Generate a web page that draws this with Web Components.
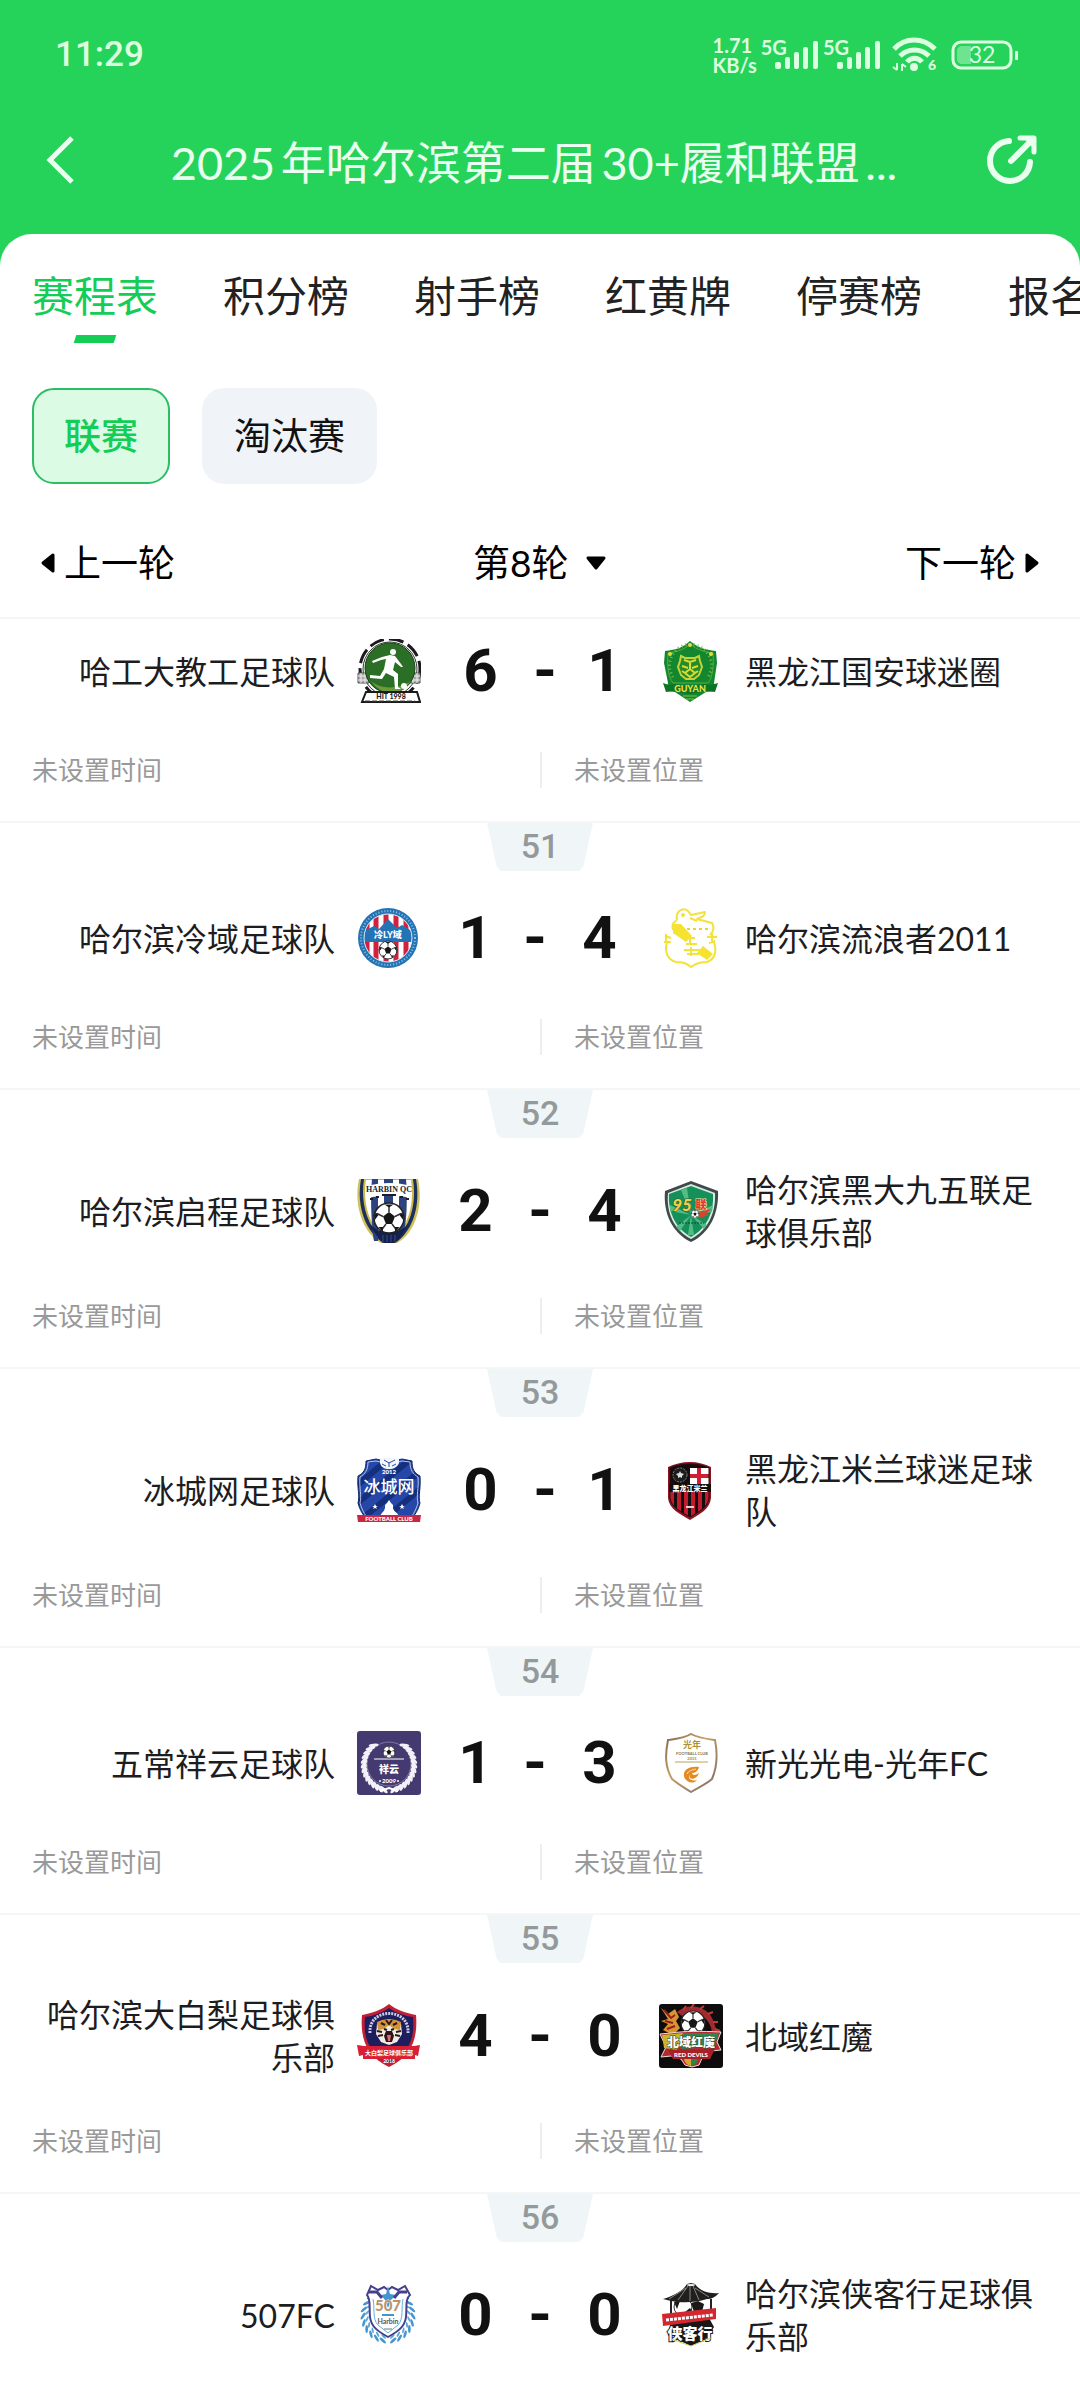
<!DOCTYPE html>
<html lang="zh-CN">
<head>
<meta charset="utf-8">
<meta name="viewport" content="width=device-width, initial-scale=1">
<title>赛程表</title>
<style>
  body {
    margin: 0;
    background: #fff;
    color: #1d1d1f;
    font-family: Lato, "Noto Sans CJK SC", sans-serif;
  }
</style>
</head>
<body>
<league-page>
  <status-bar slot="top" time="11:29"></status-bar>
  <page-header slot="top">2025年哈尔滨第二届30+履和联盟...</page-header>

  <tab-bar>
    <tab-item active>赛程表</tab-item>
    <tab-item>积分榜</tab-item>
    <tab-item>射手榜</tab-item>
    <tab-item>红黄牌</tab-item>
    <tab-item>停赛榜</tab-item>
    <tab-item>报名</tab-item>
  </tab-bar>

  <stage-filter>
    <stage-chip active>联赛</stage-chip>
    <stage-chip>淘汰赛</stage-chip>
  </stage-filter>

  <round-nav round="8"></round-nav>

  <match-card home="哈工大教工足球队" home-logo="hit" away="黑龙江国安球迷圈" away-logo="guoan" score="6-1" time="未设置时间" place="未设置位置"></match-card>
  <match-card number="51" home="哈尔滨冷域足球队" home-logo="lengyu" away="哈尔滨流浪者2011" away-logo="wanderer" score="1-4" time="未设置时间" place="未设置位置"></match-card>
  <match-card number="52" home="哈尔滨启程足球队" home-logo="qicheng" away="哈尔滨黑大九五联足球俱乐部" away-logo="nine5" score="2-4" time="未设置时间" place="未设置位置"></match-card>
  <match-card number="53" home="冰城网足球队" home-logo="bingcheng" away="黑龙江米兰球迷足球队" away-logo="milan" score="0-1" time="未设置时间" place="未设置位置"></match-card>
  <match-card number="54" home="五常祥云足球队" home-logo="xiangyun" away="新光光电-光年FC" away-logo="guangnian" score="1-3" time="未设置时间" place="未设置位置"></match-card>
  <match-card number="55" home="哈尔滨大白梨足球俱乐部" home-logo="dabaili" away="北域红魔" away-logo="redevils" score="4-0" time="未设置时间" place="未设置位置"></match-card>
  <match-card number="56" home="507FC" home-logo="fc507" away="哈尔滨侠客行足球俱乐部" away-logo="xiake" score="0-0"></match-card>
</league-page>

<script>
// ---- svg helpers -------------------------------------------------------

// small football, drawn on a 20 unit circle and scaled to r
function ball(cx, cy, r) {
  return `
    <g transform="translate(${cx} ${cy}) scale(${r / 10})">
      <circle r="10" fill="#fff" stroke="#222" stroke-width="1"/>
      <path d="M0-4 4-1 2 4H-2L-4-1Z" fill="#161616"/>
      <path d="M0-4V-8M4-1 8-3M2 4 5 8M-2 4-5 8M-4-1-8-3" stroke="#333" stroke-width="1"/>
      <path d="M-3-9 3-9 0-7ZM9-4 10 2 7-2ZM-9-4-10 2-7-2ZM4 9 7 6 4 6ZM-4 9-7 6-4 6Z" fill="#161616"/>
    </g>`;
}

// two branches of leaves that start at the bottom and climb both sides
function laurel(cx, cy, r, color, count, size) {
  let out = "";
  for (let i = 0; i < count; i++) {
    const a = 12 + i * (140 / count);
    [a, -a].forEach(angle => {
      const tilt = angle > 0 ? 32 : -32;
      out += `<g transform="rotate(${-angle} ${cx} ${cy}) translate(${cx} ${cy + r}) rotate(${-tilt})">
        <ellipse rx="${size}" ry="${size / 3}" fill="${color}"/></g>`;
    });
  }
  return out;
}

const LOGOS = {
  hit: `
    <circle cx="33" cy="30" r="30" fill="#fff" stroke="#1b1b1b" stroke-width="3" stroke-dasharray="15 5"/>
    <circle cx="33" cy="30" r="27" fill="none" stroke="#333" stroke-width="1"/>
    <path d="M1 34h11v10H1ZM53 34h10v10H53Z" fill="#aaa" stroke="#555"/>
    <path d="M1 37h11M1 41h11M53 37h10M53 41h10M4 34v10M8 34v10M56 34v10M60 34v10" stroke="#eee"/>
    <circle cx="33" cy="29" r="25" fill="#2b6e25" stroke="#173f14"/>
    <path d="M14 42c8 8 28 9 40 0-6 9-14 12-20 12s-15-4-20-12Z" fill="#6d9a3c"/>
    <circle cx="36" cy="13" r="3" fill="#fff"/>
    <path d="M25 18 33 16 38 17 44 25 46 28 44 28 38 23 36 31 41 35 41 48 44 50 38 50 37 38 29 34 25 40 13 39 13 36 23 37 27 30 29 20 24 21 16 24 15 22Z" fill="#fff"/>
    <circle cx="47" cy="47" r="3" fill="#fff"/>
    <path d="M9 53H60L63 63H5Z" fill="#fff" stroke="#1b1b1b" stroke-width="2"/>
    <text x="34" y="60" font-size="7" font-weight="900" text-anchor="middle" fill="#1b1b1b">HIT 1998</text>
    <path d="M8 62h50" stroke="#444" stroke-dasharray="5 2"/>`,
  guoan: `
    <path d="M31 2C38 8 46 11 57 12L58 24 55 44 56 52 47 53 31 63 16 53 7 52 9 44 5 24 6 12C17 11 25 8 31 2Z" fill="#12872f"/>
    <path d="M31 5C38 11 46 13 54 14 55 26 54 38 49 44H14C9 38 8 26 9 14 17 13 25 11 31 5Z" fill="none" stroke="#58ab3a"/>
    <path d="M14 38A21 21 0 1 1 49 38" fill="none" stroke="#7fbd42" stroke-width="3" stroke-dasharray="1 3"/>
    <circle cx="31" cy="6" r="2" fill="#e2dd3d"/><circle cx="11" cy="15" r="2" fill="#e2dd3d"/><circle cx="52" cy="15" r="2" fill="#e2dd3d"/>
    <path d="M22 17 26 19H36L40 17 41 22 43 28 40 36 35 40H27L22 36 19 28 21 22Z" fill="#268c25" stroke="#c3d23b" stroke-width="2"/>
    <path d="M25 21 31 23 37 21M23 27l6 2M39 27l-6 2M26 34l5-4 5 4-5 4ZM31 23V30M23 32l3 2M39 32l-3 2" fill="none" stroke="#d9dc38" stroke-width="2"/>
    <path d="M4 44 10 46 16 45 31 47 46 45 52 46 59 44 56 53 48 52 31 55 14 52 7 53Z" fill="#0c7427"/>
    <text x="31" y="53" font-size="9" font-weight="900" text-anchor="middle" fill="#e6e03b">GUYAN</text>
    <path d="M24 57h14M27 60h8" stroke="#85bf3c"/>`,
  lengyu: `
    <clipPath id="in"><circle cx="31" cy="32" r="24"/></clipPath>
    <circle cx="31" cy="32" r="30" fill="#2474b5"/>
    <circle cx="31" cy="32" r="27" fill="none" stroke="#8fc2e6" stroke-width="2" stroke-dasharray="1 2"/>
    <circle cx="31" cy="32" r="24" fill="#fff"/>
    <g clip-path="url(#in)">
      <path d="M10 8V56M19 8V56M29 8V56M39 8V56M49 8V56" stroke="#d3203c" stroke-width="5"/>
      <path d="M5 36V26L17 20 22 23 31 13 40 22 45 19 58 27V36Z" fill="#2474b5"/>
    </g>
    <circle cx="31" cy="32" r="24" fill="none" stroke="#d6e9f6"/>
    <text x="31" y="32" font-size="9" font-weight="900" text-anchor="middle" fill="#fff">冷LY域</text>
    ${ball(31, 44, 9)}`,
  wanderer: `
    <g fill="none" stroke="#f3e23a" stroke-width="2" stroke-linejoin="round">
      <path d="M18 14C16 5 24 1 29 5L32 9 46 6C46 10 43 11 38 13L53 17C56 22 54 26 51 29M18 14C13 17 13 20 14 24"/>
      <path d="M8 36C5 46 9 54 17 56 24 56 28 57 32 61 37 57 42 56 48 56 56 53 58 46 55 36"/>
      <path d="M31 12 38 15"/>
      <path d="M6 30l6 2M5 36h7M7 28v8M48 31h10M53 28v9M50 37l6-2"/>
      <path d="M28 32h8M31 29v9M27 38h11M25 44h16M28 48h12M32 41v9"/>
    </g>
    <path d="M14 18 22 18 33 30 27 36 14 27ZM44 40 54 48 48 54 38 47Z" fill="#f6e231"/>
    <circle cx="24" cy="9" r="2" fill="#f3e23a"/>
    <path d="M28 23h3M34 23h3M40 23h3M46 23h3" stroke="#e9d42a" stroke-width="2"/>`,
  qicheng: `
    <path d="M2 0H61C67 28 57 55 40 64H24C7 55-4 28 2 0Z" fill="#cfc25a"/>
    <path d="M4 0H59C64 28 55 53 38 64H26C9 53-1 28 4 0Z" fill="#1d2f5c"/>
    <path d="M8 0H55C59 27 51 50 36 61H28C13 50 4 27 8 0Z" fill="#fff" stroke="#cdb84e" stroke-width="2"/>
    <path d="M15 0h6V62H17C15 50 13 25 15 0ZM27 0h9V60H27ZM42 0h7C51 25 49 50 46 55H42Z" fill="#2b4480"/>
    <path d="M10 7C25 3 40 3 54 7V19C40 16 25 16 10 19Z" fill="#fff"/>
    <text x="32" y="13" font-family="Liberation Serif, serif" font-size="8" font-weight="700" text-anchor="middle" fill="#1d1d25">HARBIN QC</text>
    <path d="M13 20h3M19 18h3M25 16h14M43 18h3M49 20h3" stroke="#1d1d25" stroke-width="2"/>
    <path d="M13 44C18 56 46 56 51 44 48 54 42 60 37 64H28C20 58 15 52 13 44Z" fill="#14204d"/>
    ${ball(32, 39, 15)}
    <path d="M26 56v7M30 56v7M34 56v7M38 56v7" stroke="#3a4a86"/>`,
  nine5: `
    <path d="M32 2 59 12C60 34 51 54 32 63 13 54 4 34 6 12Z" fill="#3e4a4c"/>
    <path d="M32 5 56 14C57 34 49 51 32 60 15 51 7 34 9 14Z" fill="#dcebe2"/>
    <path d="M32 7 54 15C55 33 48 49 32 58 16 49 9 33 10 15Z" fill="#14905a"/>
    <path d="M32 36 11 26 11 32ZM32 36 17 48 21 52ZM32 36 29 56 35 56ZM32 36 45 50 48 46ZM32 36 54 26 53 33ZM32 36 22 11 28 9Z" fill="#55bb84"/>
    <text x="23" y="32" font-size="17" font-weight="900" font-style="italic" text-anchor="middle" fill="#f0d04a" stroke="#3c5b25" stroke-width="1" paint-order="stroke">95</text>
    <text x="42" y="30" font-size="11" font-weight="900" text-anchor="middle" fill="#dd3a2c" stroke="#f6e6ad" stroke-width="1" paint-order="stroke">联</text>
    <path d="M38 33 53 30 46 35 51 36 40 39Z" fill="#d8452f"/>
    ${ball(36, 35, 4)}
    <path d="M20 44h25" stroke="#0c4930" stroke-dasharray="2 1"/>`,
  bingcheng: `
    <clipPath id="in"><path d="M9 3 19 1 32 4 45 1 55 3C55 11 57 15 63 18 64 30 61 38 63 45 61 53 57 58 55 60H9C7 58 3 53 1 45 3 38 0 30 1 18 7 15 9 11 9 3Z"/></clipPath>
    <g clip-path="url(#in)">
      <path d="M0 0H64V64H0Z" fill="#2647a8"/>
      <path d="M-8 34 40-6M-8 52 60-4M-4 68 72 6M14 72 74 22" stroke="#14307d" stroke-width="6"/>
    </g>
    <path d="M11 4 19 3 32 6 45 3 53 4C53 12 56 16 61 19 62 30 59 38 61 45 59 52 56 57 54 59H10C8 57 5 52 3 45 5 38 2 30 3 19 8 16 11 12 11 4Z" fill="none" stroke="#b8c6ec"/>
    <path d="M9 3 19 1 32 4 45 1 55 3C55 11 57 15 63 18 64 30 61 38 63 45 61 53 57 58 55 60H9C7 58 3 53 1 45 3 38 0 30 1 18 7 15 9 11 9 3Z" fill="none" stroke="#142a6b"/>
    <path d="M23 0H42V5C40 9 37 11 32 11S24 9 23 5Z" fill="#f4f6fc"/>
    <path d="M27 2 32 5 38 2M32 5V9M25 6 29 8M39 6 35 8" stroke="#2647a8" fill="none"/>
    <text x="32" y="16" font-size="6" font-weight="900" text-anchor="middle" fill="#fff">2012</text>
    <text x="32" y="35" font-size="17" font-weight="500" text-anchor="middle" fill="#fff">冰城网</text>
    <path d="M23 58C25 54 27 54 28 50V47L30 45 32 42 34 45 36 47V50C37 54 40 54 42 58Z" fill="#fff"/>
    <path d="M18 46l1 2h2l-2 1 1 2-2-1-2 1 1-2-2-1h2ZM45 46l1 2h2l-2 1 1 2-2-1-2 1 1-2-2-1h2Z" fill="#fff"/>
    <path d="M0 57H64L63 64H1Z" fill="#ca2545"/>
    <text x="32" y="63" font-size="6" font-weight="900" text-anchor="middle" fill="#fff">FOOTBALL CLUB</text>`,
  milan: `
    <clipPath id="in"><path d="M31 6C38 6 44 7 50 10V40C49 49 40 54 31 59 22 54 12 49 11 40V10C17 7 24 6 31 6Z"/></clipPath>
    <path d="M31 4C39 4 46 6 52 9V40C51 51 41 56 31 62 21 56 10 51 9 40V9C15 6 23 4 31 4Z" fill="#8c1420"/>
    <g clip-path="url(#in)">
      <path d="M9 4H52V62H9Z" fill="#140d0e"/>
      <path d="M31 10H51V26H31Z" fill="#fff"/>
      <path d="M31 18H51M40 10V26" stroke="#cf1f32" stroke-width="4"/>
      <path d="M13 34V56M20 34V58M27 34V60M34 34V60M41 34V58M48 34V56" stroke="#c01c2e" stroke-width="4"/>
    </g>
    <path d="M31 6C38 6 44 7 50 10V40C49 49 40 54 31 59 22 54 12 49 11 40V10C17 7 24 6 31 6Z" fill="none" stroke="#2a0b0f"/>
    <circle cx="21" cy="17" r="7" fill="#1c1c1c" stroke="#7d7d7d" stroke-dasharray="2 1"/>
    <path d="M21 13 22 15 25 16 23 18 23 20 21 19 19 20 19 18 17 16 20 15Z" fill="#ddd"/>
    <path d="M10 26H52V34H10Z" fill="#140d0e"/>
    <text x="31" y="33" font-size="7" font-weight="900" text-anchor="middle" fill="#fff">黑龙江米兰</text>
    <path d="M27 49h8" stroke="#f0c9cc" stroke-width="2"/>`,
  xiangyun: `
    <rect width="64" height="64" rx="3" fill="#453a70"/>
    <circle cx="32" cy="33" r="22" fill="none" stroke="#8078a4"/>
    ${laurel(32, 34, 25, "#f2f1f7", 14, 5)}
    <path d="M17 28H47" stroke="#fff"/>
    ${ball(32, 21, 6)}
    <text x="32" y="42" font-size="10" font-weight="900" text-anchor="middle" fill="#fff">祥云</text>
    <text x="32" y="52" font-size="6" font-weight="900" text-anchor="middle" fill="#fff">2009</text>
    <circle cx="23" cy="50" r="1" fill="#fff"/><circle cx="41" cy="50" r="1" fill="#fff"/>
    <path d="M23 60 32 57 41 60" fill="none" stroke="#fff" stroke-width="2"/>`,
  guangnian: `
    <linearGradient id="edge" x2="1" y2="1"><stop stop-color="#7f6a5c"/><stop offset="0.4" stop-color="#c2a061"/><stop offset="1" stop-color="#7b6a71"/></linearGradient>
    <path d="M32 3C39 7 48 8 56 9 59 24 58 36 53 48 46 54 38 57 32 61 26 57 20 54 13 48 6 36 6 24 9 9 17 8 26 7 32 3Z" fill="#fff" stroke="url(#edge)" stroke-width="2"/>
    <text x="33" y="17" font-family="Noto Sans CJK SC, sans-serif" font-size="9" font-weight="700" text-anchor="middle" fill="#ad9034">光年</text>
    <text x="33" y="24" font-size="4" font-weight="900" text-anchor="middle" fill="#8c7d58">FOOTBALL CLUB</text>
    <text x="33" y="29" font-size="4" font-weight="900" text-anchor="middle" fill="#b39137">2015</text>
    <path d="M16 31H49" stroke="#b7a554"/>
    <path d="M40 36C30 35 24 39 25 45 26 51 34 54 38 49 32 51 28 47 31 43 28 50 38 49 40 42 36 45 33 44 33 42 36 42 39 40 40 36Z" fill="#e58a22"/>
    <path d="M28 43C29 40 33 39 37 38" fill="none" stroke="#fbe3bd"/>`,
  dabaili: `
    <path d="M32 0C39 6 49 9 59 11 61 34 55 52 32 63 9 52 3 34 5 11 15 9 25 6 32 0Z" fill="#c21f34"/>
    <path d="M32 4C39 9 48 12 56 13 58 33 53 49 32 59 11 49 6 33 8 13 16 12 25 9 32 4Z" fill="#1e1d5e"/>
    <path d="M13 29C11 3 53 3 51 29" fill="none" stroke="#c9cbe4" stroke-width="3" stroke-dasharray="2 1"/>
    <path d="M20 20 24 17 32 15 40 17 44 20 45 30 40 38 32 41 24 38 19 30Z" fill="#f0ece2"/>
    <path d="M20 18 25 16 32 15 39 16 44 18 43 26 37 25 32 21 27 25 21 26Z" fill="#d29436"/>
    <path d="M29 16 32 20 35 16M24 19l4 2M40 19l-4 2M20 27l5 1M44 27l-5 1M21 32l5-1M43 32l-5-1" fill="none" stroke="#2b1b16" stroke-width="2"/>
    <path d="M27 25l3 1M37 25l-3 1" stroke="#1a1a1a" stroke-width="2"/>
    <path d="M29 27H35L37 32 35 38H29L27 32Z" fill="#30121a"/>
    <path d="M30 31H34L33 37H31Z" fill="#e06f75"/>
    <path d="M0 41 7 42 57 42 63 41 61 52 58 51 58 55H6V51L2 52Z" fill="#d91f36"/>
    <text x="32" y="51" font-size="6" font-weight="700" text-anchor="middle" fill="#fff">大白梨足球俱乐部</text>
    <text x="32" y="59" font-size="5" font-weight="900" text-anchor="middle" fill="#fff">2018</text>`,
  redevils: `
    <rect width="64" height="64" rx="3" fill="#0f0c0d"/>
    <path d="M18 8C28-1 50 0 55 19L59 30 53 28C51 14 39 5 23 12Z" fill="#a12a2f"/>
    <path d="M24 6l3-4M32 4l3-4M41 5l4-3M49 10l5-2M54 18l5 0M56 25l5 2" stroke="#c03a39" stroke-width="2"/>
    <path d="M2 4 9 10 16 5 20 13 17 17 21 24 14 31 4 26 9 20 2 17 9 15Z" fill="#d9932f"/>
    <path d="M5 6 12 14 16 11M6 17 14 19M8 25 16 22" fill="none" stroke="#8f2023" stroke-width="2"/>
    ${ball(34, 19, 12)}
    <path d="M1 30 12 29C26 27 41 27 62 28L58 38 62 46 52 47 44 52 40 61 33 63 26 61 22 55 12 52 2 53 7 43Z" fill="#b5282f" stroke="#e8e1da"/>
    <path d="M3 31 24 29 18 46 5 44Z" fill="#cbb42d"/><path d="M24 29 60 29 55 43 22 45Z" fill="#28864f"/>
    <text x="32" y="43" font-size="12" font-weight="900" text-anchor="middle" fill="#fff" stroke="#27462f" stroke-width="1" paint-order="stroke">北域红魔</text>
    <path d="M9 46 56 45 51 55 14 55Z" fill="#a81f28"/>
    <text x="32" y="53" font-size="6" font-weight="900" text-anchor="middle" fill="#fff">RED DEVILS</text>
    <path d="M25 55H32V62C28 61 26 59 25 55Z" fill="#d9a62c"/><path d="M32 55H39C38 59 36 61 32 62Z" fill="#27864a"/>`,
  fc507: `
    ${laurel(31, 33, 25, "#4394cf", 9, 4)}
    ${laurel(31, 33, 21, "#5aa9db", 8, 3)}
    <path d="M14 3 21 7 27 4 31 7 35 4 41 7 48 3 53 12C48 16 50 24 49 34 48 44 40 49 31 54 22 49 14 44 13 34 12 24 14 16 10 12Z" fill="#fff" stroke="#44408e" stroke-width="2"/>
    <path d="M16 16C18 24 15 36 21 42L31 50 41 42C47 36 44 24 46 16" fill="none" stroke="#5eb3de"/>
    <path d="M24 12 29 11 31 3 33 11 39 12 34 17 31 25 28 17Z" fill="#4394cf"/>
    <path d="M12 9 20 9 25 15M50 9 42 9 37 15" fill="none" stroke="#44408e" stroke-width="3"/>
    <text x="31" y="28" font-size="15" font-weight="900" text-anchor="middle" fill="#bb946e" stroke="#fff" stroke-width="1" paint-order="stroke">507</text>
    <path d="M25 32h12" stroke="#4394cf" stroke-width="2"/>
    <text x="31" y="41" font-size="7" text-anchor="middle" font-weight="700" fill="#555">Harbin</text>
    <path d="M27 46h8" stroke="#777"/>`,
  xiake: `
    <path d="M10 46 17 56 32 63 47 56 55 44 50 35H14Z" fill="#171718"/>
    <path d="M15 17H49V34H15Z" fill="#fff"/>
    <path d="M12 17V34M52 16V34" stroke="#222" stroke-width="2"/>
    <circle cx="24" cy="24" r="9" fill="#fff" stroke="#333"/>
    <path d="M32 20 39 18 45 21 43 29 35 29ZM15 19 21 18 18 26ZM26 29 31 25 34 30Z" fill="#191919"/>
    <path d="M4 16C14 13 24 8 28 1L32 0 36 1C41 8 50 11 60 10 56 14 53 16 48 16 36 20 22 20 12 18Z" fill="#211e1e"/>
    <path d="M31 2V18M29 3 19 17M27 5 10 16M34 3 40 17M36 5 50 14" stroke="#8b8784"/>
    <ellipse cx="32" cy="2" rx="4" ry="1" fill="#eee"/>
    <path d="M3 31 57 25V36L4 43Z" fill="#d4262e"/>
    <path d="M7 37 54 32" stroke="#fff" stroke-width="3" stroke-dasharray="3 1"/>
    <text x="31" y="56" font-size="15" font-weight="900" text-anchor="middle" fill="#fff" stroke="#171718" stroke-width="2" paint-order="stroke">侠客行</text>
    <path d="M12 56 32 63 52 55" fill="none" stroke="#cfcf5a"/>`
};

// ---- elements ----------------------------------------------------------

class BaseElement extends HTMLElement {
  constructor() {
    super();
    this.attachShadow({ mode: "open" });
  }

  connectedCallback() {
    this.shadowRoot.innerHTML = this.render();
  }
}

class LeaguePage extends BaseElement {
  render() {
    return `
      <style>
        :host { display: block; min-height: 100vh; overflow: hidden; background: #25d35a; }
        main { background: #fff; border-radius: 32px 32px 0 0; min-height: calc(100vh - 234px); }
      </style>
      <slot name="top"></slot>
      <main><slot></slot></main>
    `;
  }
}

class StatusBar extends BaseElement {
  _signal() {
    return `
      <span class="signal">
        <b>5G</b>
        <svg width="44" height="28" viewBox="0 0 44 28" fill="currentColor" aria-hidden="true">
          <rect x="0" y="21" width="6" height="7" rx="2"/>
          <rect x="10" y="16" width="5" height="12" rx="2"/>
          <rect x="19" y="11" width="5" height="17" rx="2"/>
          <rect x="28" y="6" width="5" height="22" rx="2"/>
          <rect x="38" y="0" width="5" height="28" rx="2"/>
        </svg>
      </span>`;
  }

  render() {
    return `
      <style>
        :host { display: flex; justify-content: space-between; align-items: center; height: 110px; padding: 0 61px 0 55px; color: #dcffe0; }
        .time { font: 500 35px/44px Roboto, sans-serif; }
        .right { display: flex; align-items: center; }
        .speed { font-size: 20px; line-height: 20px; font-weight: 700; }
        .speed span { display: block; }
        .signal { display: flex; align-items: flex-start; margin-left: 4px; }
        .signal b { font-size: 20px; line-height: 20px; margin: -4px -12px 0 0; }
        .wifi { margin-left: 11px; }
        .battery { margin-left: 9px; }
        svg { display: block; }
      </style>
      <span class="time">${this.getAttribute("time")}</span>
      <div class="right">
        <div class="speed"><span>1.71</span><span>KB/s</span></div>
        ${this._signal()}
        ${this._signal()}
        <svg class="wifi" width="50" height="38" viewBox="0 0 50 38" fill="none" stroke="currentColor" stroke-width="5" aria-hidden="true">
          <path d="M2 13C13 1 31 1 43 13M8 20C16 12 29 12 37 20M15 26C19 21 26 21 30 26"/>
          <circle cx="22" cy="31" r="4" fill="currentColor" stroke="none"/>
          <path d="M5 34V27M1 31 5 34M10 35V28M10 28 14 31" stroke-width="2"/>
          <text x="36" y="34" font-size="14" font-weight="900" fill="currentColor" stroke="none">6</text>
        </svg>
        <svg class="battery" width="68" height="30" viewBox="0 0 68 30" aria-hidden="true">
          <rect x="2" y="2" width="58" height="26" rx="8" fill="none" stroke="currentColor" stroke-width="3"/>
          <path d="M12 6H20V24H12C8 24 6 22 6 19V11C6 8 8 6 12 6Z" fill="currentColor" opacity="0.4"/>
          <rect x="64" y="11" width="3" height="9" rx="1" fill="currentColor"/>
          <text x="31" y="23" font-size="23" text-anchor="middle" fill="currentColor">32</text>
        </svg>
      </div>
    `;
  }
}

class PageHeader extends BaseElement {
  render() {
    return `
      <style>
        :host { display: flex; align-items: center; justify-content: space-between; height: 124px; padding: 0 40px 24px; box-sizing: border-box; color: #ebfff0; }
        h1 { margin: 6px 0 0; font-size: 45px; line-height: 60px; font-weight: 400; white-space: nowrap; text-autospace: normal; }
        button { border: 0; background: none; padding: 0; color: inherit; }
        svg { display: block; }
      </style>
      <button aria-label="返回">
        <svg width="42" height="50" viewBox="0 0 42 50" fill="none" stroke="currentColor" stroke-width="5"><path d="M32 3 10 25 32 47"/></svg>
      </button>
      <h1><slot></slot></h1>
      <button aria-label="分享">
        <svg width="54" height="54" viewBox="0 0 54 54" fill="none" stroke="currentColor" stroke-width="6" stroke-linecap="round">
          <path d="M23 8A20 20 0 1 0 44 29"/>
          <path d="M25 28 45 8"/>
          <path d="M34 5H48V19" stroke-width="5" stroke-linejoin="round"/>
          <path d="M38 5H48V15Z" fill="currentColor" stroke-width="1"/>
        </svg>
      </button>
    `;
  }
}

class TabBar extends BaseElement {
  render() {
    return `
      <style>
        :host { display: block; overflow: hidden; }
        nav { display: flex; gap: 65px; padding: 31px 32px 0; width: max-content; }
      </style>
      <nav><slot></slot></nav>
    `;
  }
}

class TabItem extends BaseElement {
  render() {
    return `
      <style>
        :host { display: block; min-width: 126px; text-align: center; color: #222; }
        :host([active]) { color: #14cd56; }
        button { display: block; width: 100%; border: 0; padding: 0; background: none; font: inherit; font-size: 42px; line-height: 62px; color: inherit; }
        button::after { content: ""; display: block; width: 40px; height: 8px; margin: 8px auto 0; transform: skewX(-18deg); }
        :host([active]) button::after { background: #14cd56; }
      </style>
      <button><slot></slot></button>
    `;
  }
}

class StageFilter extends BaseElement {
  render() {
    return `
      <style>:host { display: flex; gap: 32px; padding: 45px 32px 0; }</style>
      <slot></slot>
    `;
  }
}

class StageChip extends BaseElement {
  render() {
    return `
      <style>
        :host { display: block; }
        button { display: block; box-sizing: border-box; height: 96px; padding: 0 30px; border: 2px solid #f0f4f9; border-radius: 22px; background: #f0f4f9; color: #111; font: inherit; font-size: 37px; line-height: 56px; }
        :host([active]) button { border-color: #2dbd63; background: #dcfbe5; color: #14cd56; font-weight: 500; }
      </style>
      <button><slot></slot></button>
    `;
  }
}

class RoundNav extends BaseElement {
  render() {
    const round = this.getAttribute("round");
    return `
      <style>
        :host { display: grid; grid-template-columns: 1fr auto 1fr; align-items: center; padding: 52px 40px 27px; font-size: 37px; line-height: 54px; color: #000; }
        button, select { border: 0; padding: 0; margin: 0; background: none; font: inherit; color: inherit; }
        button { display: flex; align-items: center; gap: 8px; }
        .next { justify-self: end; }
        label { display: flex; align-items: center; gap: 16px; }
        select { appearance: none; height: 54px; text-autospace: normal; }
        svg { display: block; fill: currentColor; stroke: currentColor; stroke-width: 3; stroke-linejoin: round; }
      </style>
      <button class="prev"><svg width="16" height="22" viewBox="0 0 16 22"><path d="M3 11 13 3V19Z"/></svg>上一轮</button>
      <label>
        <select aria-label="轮次"><option>第${round}轮</option></select>
        <svg width="22" height="16" viewBox="0 0 22 16"><path d="M3 3H19L11 13Z"/></svg>
      </label>
      <button class="next">下一轮<svg width="16" height="22" viewBox="0 0 16 22"><path d="M13 11 3 3V19Z"/></svg></button>
    `;
  }
}

class TeamLogo extends BaseElement {
  render() {
    return `
      <style>
        :host { display: block; width: 64px; height: 64px; }
        svg { display: block; width: 100%; height: 100%; }
      </style>
      <svg viewBox="0 0 64 64" aria-hidden="true">${LOGOS[this.getAttribute("name")] || ""}</svg>
    `;
  }
}

class MatchCard extends BaseElement {
  _digit(value) {
    return `<span class="${value === "1" ? "digit one" : "digit"}">${value}</span>`;
  }

  render() {
    const attr = name => this.getAttribute(name) || "";
    const [home, away] = attr("score").split("-");
    const number = attr("number");

    return `
      <style>
        :host { display: block; border-top: 2px solid #f5f7f7; padding-top: 15px; }
        :host([number]) { padding-top: 0; }
        .number { display: block; width: 106px; height: 48px; margin: 0 auto 30px; background: #f0f6f8; clip-path: polygon(0 0, 100% 0, 91% 90%, 87% 100%, 13% 100%, 9% 90%); font: 500 34px/46px Roboto, sans-serif; color: #949a9b; text-align: center; }
        .teams { display: grid; grid-template-columns: 1fr 64px 238px 64px 1fr; align-items: center; min-height: 74px; padding: 0 32px; }
        .name { font-size: 32px; line-height: 43px; }
        .home { text-align: right; padding-right: 22px; }
        .away { padding-left: 22px; }
        .score { display: flex; justify-content: center; gap: 38px; font: 700 60px/74px Roboto, sans-serif; color: #111; }
        .digit { display: flex; justify-content: center; width: 31px; }
        .one { width: 21px; }
        .dash { display: flex; justify-content: center; width: 22px; }
        .info { display: grid; grid-template-columns: 1fr 1fr; margin-top: 44px; padding-bottom: 33px; font-size: 26px; line-height: 36px; color: #999; }
        .info span { padding-left: 32px; }
        .place { border-left: 2px solid #eee; }
      </style>
      ${number ? `<span class="number">${number}</span>` : ""}
      <div class="teams">
        <span class="name home">${attr("home")}</span>
        <team-logo name="${attr("home-logo")}"></team-logo>
        <div class="score">${this._digit(home)}<span class="dash">-</span>${this._digit(away)}</div>
        <team-logo name="${attr("away-logo")}"></team-logo>
        <span class="name away">${attr("away")}</span>
      </div>
      ${attr("time") ? `
        <div class="info">
          <span>${attr("time")}</span>
          <span class="place">${attr("place")}</span>
        </div>
      ` : ""}
    `;
  }
}

customElements.define("league-page", LeaguePage);
customElements.define("status-bar", StatusBar);
customElements.define("page-header", PageHeader);
customElements.define("tab-bar", TabBar);
customElements.define("tab-item", TabItem);
customElements.define("stage-filter", StageFilter);
customElements.define("stage-chip", StageChip);
customElements.define("round-nav", RoundNav);
customElements.define("team-logo", TeamLogo);
customElements.define("match-card", MatchCard);
</script>
</body>
</html>
